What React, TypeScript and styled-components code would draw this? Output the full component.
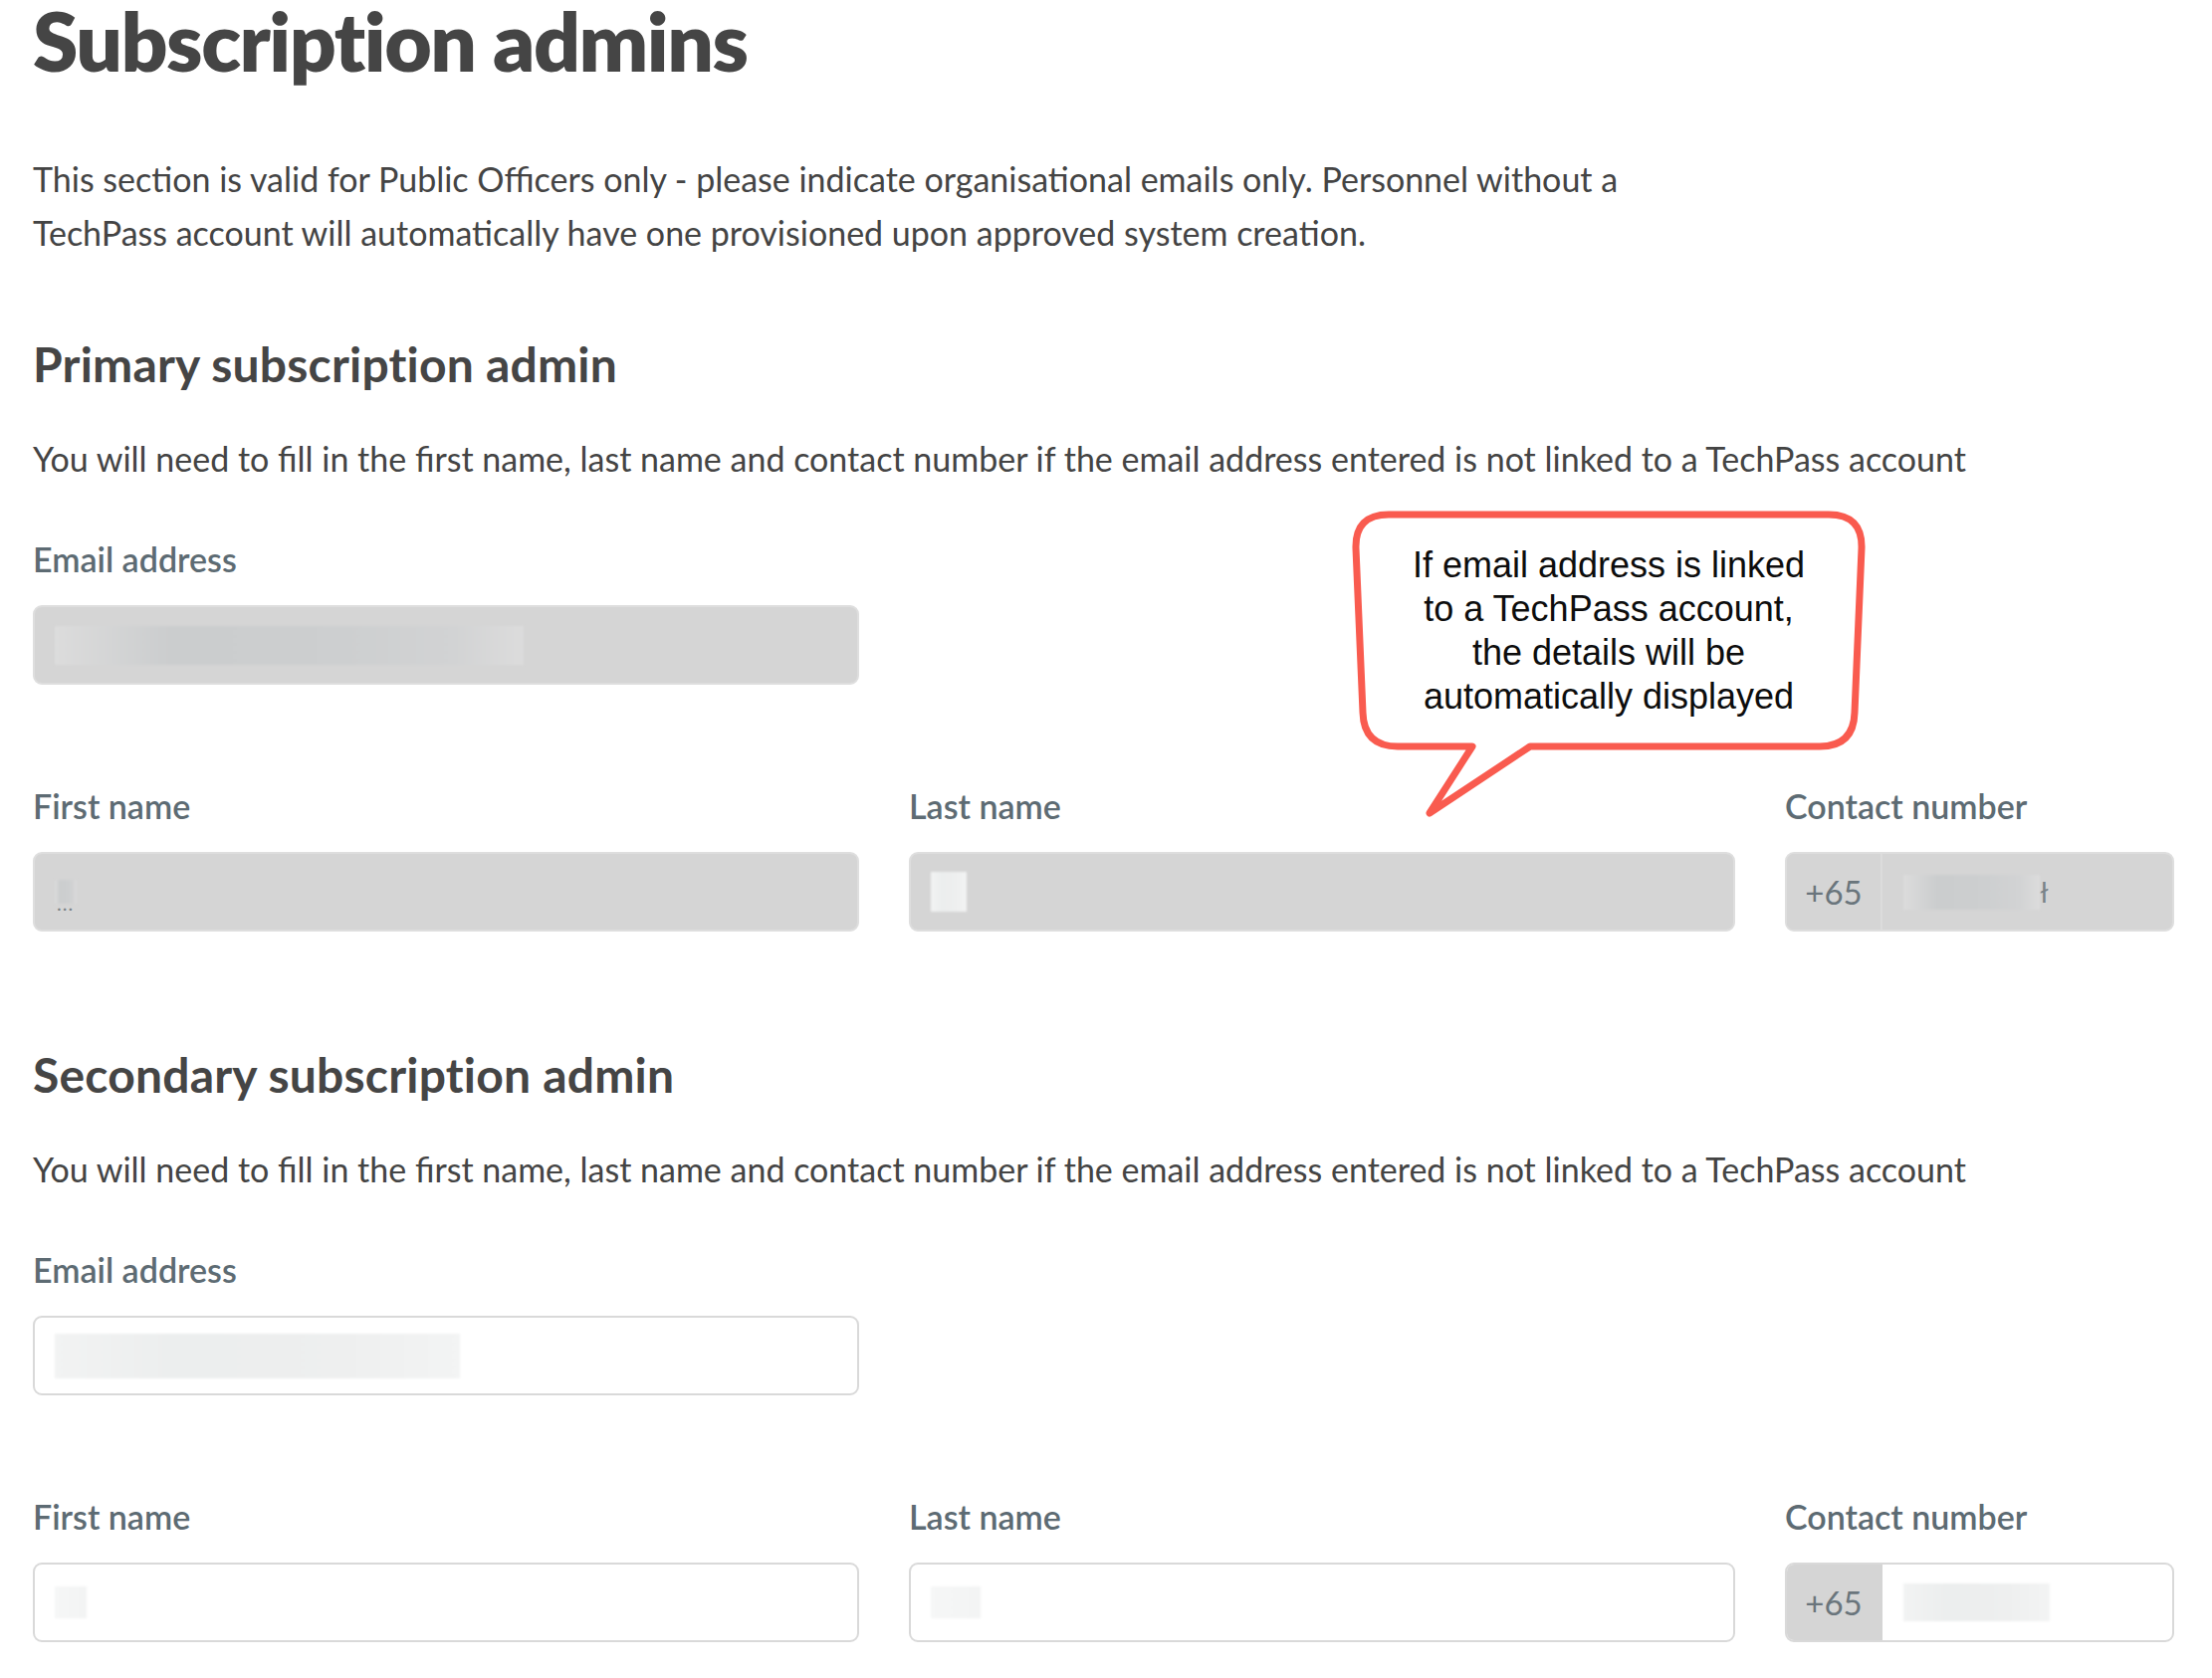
import React from "react";
import styled, { createGlobalStyle } from "styled-components";

const GlobalStyle = createGlobalStyle`
  html, body { margin: 0; padding: 0; background: #ffffff; }
  body { font-family: Lato, "Open Sans", sans-serif; }
`;

const Page = styled.main`
  position: relative;
  width: 2222px;
  height: 1686px;
  overflow: hidden;
  padding-left: 33px;
  box-sizing: border-box;
  color: #464646;
  font-family: Lato, "Open Sans", sans-serif;
`;

const Title = styled.h1`
  margin: 0;
  padding-top: 2px;
  font-size: 82px;
  line-height: 76px;
  font-weight: 800;
  letter-spacing: -1.5px;
  color: #454545;
`;

const Paragraph = styled.p<{ $gap: number }>`
  margin: ${(p) => p.$gap}px 0 0;
  font-size: 34px;
  line-height: 54px;
  font-weight: 400;
  color: #444444;
`;

const Section = styled.section<{ $gap: number }>`
  margin-top: ${(p) => p.$gap}px;
  display: flex;
  flex-direction: column;
`;

const SectionTitle = styled.h2`
  margin: 0;
  font-size: 48px;
  line-height: 42px;
  font-weight: 700;
  letter-spacing: 0.2px;
  color: #454545;
`;

const Fields = styled.div`
  margin-top: 54px;
  display: flex;
  flex-direction: column;
  gap: 102px;
`;

const Row = styled.div`
  display: grid;
  grid-template-columns: 830px 830px 391px;
  column-gap: 50px;
`;

const Field = styled.div`
  display: flex;
  flex-direction: column;
  gap: 26px;
`;

const Label = styled.label`
  font-size: 34px;
  line-height: 40px;
  font-weight: 600;
  color: #5d6b73;
`;

const InputBox = styled.div<{ $disabled?: boolean }>`
  height: 80px;
  box-sizing: border-box;
  border: 2px solid ${(p) => (p.$disabled ? "#dedede" : "#d9d9d9")};
  border-radius: 9px;
  background: ${(p) => (p.$disabled ? "#d5d5d5" : "#ffffff")};
  display: flex;
  align-items: center;
  padding: 0 20px;
  overflow: hidden;
`;

const PhoneBox = styled.div<{ $disabled?: boolean }>`
  height: 80px;
  box-sizing: border-box;
  border: 2px solid ${(p) => (p.$disabled ? "#dedede" : "#d9d9d9")};
  border-radius: 9px;
  background: ${(p) => (p.$disabled ? "#d5d5d5" : "#ffffff")};
  display: flex;
  align-items: stretch;
  overflow: hidden;
`;

const Prefix = styled.div<{ $disabled?: boolean }>`
  width: 96px;
  box-sizing: border-box;
  background: #d5d5d5;
  border-right: 2px solid ${(p) => (p.$disabled ? "#dcdcdc" : "#d5d5d5")};
  display: flex;
  align-items: center;
  justify-content: center;
  font-size: 33px;
  color: #6a757c;
`;

const PhoneValue = styled.div`
  flex: 1;
  display: flex;
  align-items: center;
  padding-left: 21px;
`;

const Redact = styled.span<{ $w: number; $h: number; $tone: "grey" | "light" | "faint" }>`
  display: block;
  width: ${(p) => p.$w}px;
  height: ${(p) => p.$h}px;
  flex: none;
  background: ${(p) =>
    p.$tone === "grey"
      ? "linear-gradient(90deg, #dcdcdc 0%, #cbcdce 25%, #cdcfd0 60%, #d2d3d4 85%, #dcdcdc 100%)"
      : p.$tone === "light"
      ? "linear-gradient(90deg, #f2f3f3 0%, #eceeee 30%, #eeefef 70%, #f3f4f4 100%)"
      : "linear-gradient(90deg, #f6f7f7 0%, #f3f4f4 100%)"};
  filter: blur(1px);
`;

const Cursor = styled.span`
  font-size: 28px;
  color: #7a8388;
  margin-left: 0;
`;

const Dots = styled.span`
  font-size: 20px;
  color: #7a8388;
  letter-spacing: 1px;
  margin-top: 22px;
  margin-left: -20px;
`;

const Callout = styled.div`
  position: absolute;
  left: 1357px;
  top: 513px;
  width: 518px;
  height: 306px;
`;

const CalloutShape = styled.svg`
  position: absolute;
  inset: 0;
  overflow: visible;
`;

const CalloutText = styled.div`
  position: relative;
  width: 518px;
  height: 241px;
  display: flex;
  align-items: center;
  justify-content: center;
  text-align: center;
  font-family: "Liberation Sans", Arial, sans-serif;
  font-size: 36px;
  line-height: 44px;
  color: #0d0d0d;
`;

type Admin = {
  title: string;
  disabled: boolean;
};

function AdminSection({ title, disabled, gap }: Admin & { gap: number }) {
  return (
    <Section $gap={gap}>
      <SectionTitle>{title}</SectionTitle>
      <Paragraph $gap={47}>
        You will need to fill in the first name, last name and contact number if the email address entered is not
        linked to a TechPass account
      </Paragraph>
      <Fields>
        <Row>
          <Field>
            <Label>Email address</Label>
            <InputBox $disabled={disabled}>
              {disabled ? <Redact $w={471} $h={39} $tone="grey" /> : <Redact $w={407} $h={45} $tone="light" />}
            </InputBox>
          </Field>
        </Row>
        <Row>
          <Field>
            <Label>First name</Label>
            <InputBox $disabled={disabled}>
              {disabled ? (
                <>
                  <Redact $w={22} $h={24} $tone="grey" />
                  <Dots>...</Dots>
                </>
              ) : (
                <Redact $w={32} $h={32} $tone="faint" />
              )}
            </InputBox>
          </Field>
          <Field>
            <Label>Last name</Label>
            <InputBox $disabled={disabled}>
              {disabled ? <Redact $w={36} $h={40} $tone="light" /> : <Redact $w={50} $h={32} $tone="faint" />}
            </InputBox>
          </Field>
          <Field>
            <Label>Contact number</Label>
            <PhoneBox $disabled={disabled}>
              <Prefix $disabled={disabled}>+65</Prefix>
              <PhoneValue>
                {disabled ? (
                  <>
                    <Redact $w={137} $h={35} $tone="grey" />
                    <Cursor>ł</Cursor>
                  </>
                ) : (
                  <Redact $w={147} $h={38} $tone="light" />
                )}
              </PhoneValue>
            </PhoneBox>
          </Field>
        </Row>
      </Fields>
    </Section>
  );
}

export default function App() {
  return (
    <>
      <GlobalStyle />
      <Page>
        <Title>Subscription admins</Title>
        <Paragraph $gap={75}>
          This section is valid for Public Officers only - please indicate organisational emails only. Personnel without a
          <br />
          TechPass account will automatically have one provisioned upon approved system creation.
        </Paragraph>
        <AdminSection title="Primary subscription admin" disabled gap={84} />
        <AdminSection title="Secondary subscription admin" disabled={false} gap={123} />
        <Callout>
          <CalloutShape width="518" height="306" viewBox="0 0 518 306">
            <path
              d="M 38 4 L 480 4 Q 514 4 513 38 L 506 203 Q 505 237 471 237 L 180 237 L 79 304 L 122 237 L 47 237 Q 13 237 12 203 L 5 38 Q 4 4 38 4 Z"
              fill="#ffffff"
              stroke="#f95b4f"
              strokeWidth="7"
              strokeLinejoin="round"
            />
          </CalloutShape>
          <CalloutText>
            If email address is linked
            <br />
            to a TechPass account,
            <br />
            the details will be
            <br />
            automatically displayed
          </CalloutText>
        </Callout>
      </Page>
    </>
  );
}
